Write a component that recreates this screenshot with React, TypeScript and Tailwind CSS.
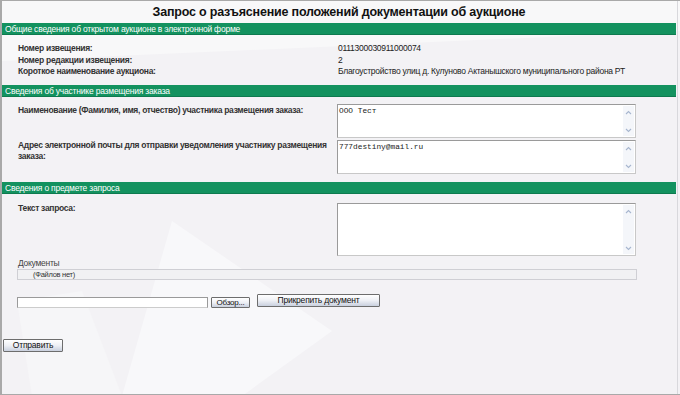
import React from "react";

const F = { fontFamily: '"Liberation Sans", Arial, sans-serif' };

function Scroll() {
  return (
    <div className="absolute right-[1px] top-[1px] bottom-[1px] w-[11px] bg-[#f4f6fa] flex flex-col justify-between items-center">
      <svg width="9" height="9" viewBox="0 0 9 9" className="mt-[2px]">
        <path d="M2 6 L4.5 3.5 L7 6" fill="none" stroke="#a7b6cf" strokeWidth="1.1" />
      </svg>
      <svg width="9" height="9" viewBox="0 0 9 9" className="mb-[1px]">
        <path d="M2 3 L4.5 5.5 L7 3" fill="none" stroke="#a7b6cf" strokeWidth="1.1" />
      </svg>
    </div>
  );
}

function Area({ h, text }: { h: number; text?: string }) {
  return (
    <div
      className="relative shrink-0 w-[299px] bg-white border border-[#9a9a9a] border-b-[#c8c8c8] border-r-[#c8c8c8]"
      style={{ height: h }}
    >
      <div
        className="px-[1px] pt-[1px] text-[7.8px] leading-[10px] text-[#222] font-normal tracking-normal"
        style={{ fontFamily: '"Liberation Mono", "Courier New", monospace' }}
      >
        {text}
      </div>
      <Scroll />
    </div>
  );
}

function Bar({ children }: { children: React.ReactNode }) {
  return (
    <div className="h-[12px] bg-[#13925f] text-white text-[8.5px] tracking-[-0.2px] leading-[12px] pl-[3px] border-b border-[#0e7a4f]">
      {children}
    </div>
  );
}

function Btn({ children, cls }: { children: React.ReactNode; cls: string }) {
  return (
    <div
      className={
        "flex items-center justify-center border border-[#6d6d6d] rounded-[1px] bg-gradient-to-b from-[#ffffff] via-[#eef0f5] to-[#c9d0de] text-[8.5px] tracking-[-0.2px] text-[#111] " +
        cls
      }
    >
      {children}
    </div>
  );
}

export default function App() {
  return (
    <div
      className="relative w-[680px] h-[395px] overflow-hidden border-l-2 border-t border-b border-[#a9a9a9] bg-[#f3f2f5]"
      style={F}
    >
      <svg className="absolute inset-0 pointer-events-none" width="680" height="395">
        <polygon points="0,0 680,0 680,30 0,60" fill="#f8f8f9" />
        <polygon points="170,220 330,330 240,395 120,395" fill="#f8f8fa" />
        <polygon points="15,300 80,290 120,395 30,395" fill="#f6f6f8" />
      </svg>
      <div className="relative mr-[2px] border-r border-[#d8d8dc] h-full pr-[1px]">
        <div className="h-[22px] flex items-center justify-center text-[12.5px] tracking-[-0.2px] font-bold text-[#111] pt-[1px]">
          Запрос о разъяснение положений документации об аукционе
        </div>
        <Bar>Общие сведения об открытом аукционе в электронной форме</Bar>
        <div className="pt-[8px] pb-[7px] text-[8.5px] tracking-[-0.27px] leading-[11.5px] text-[#222]">
          {[
            ["Номер извещения:", "0111300030911000074"],
            ["Номер редакции извещения:", "2"],
            ["Короткое наименование аукциона:", "Благоустройство улиц д. Кулуново Актанышского муниципального района РТ"],
          ].map(([a, b]) => (
            <div key={a} className="flex">
              <div className="pl-[16px] w-[336px] font-bold text-[#333] tracking-[-0.3px]">{a}</div>
              <div className="whitespace-nowrap">{b}</div>
            </div>
          ))}
        </div>
        <Bar>Сведения об участнике размещения заказа</Bar>
        <div className="pt-[7px] pb-[8px] text-[8.5px] tracking-[-0.3px] leading-[11px] text-[#333] font-bold flex flex-col gap-[2px]">
          <div className="flex">
            <div className="pl-[16px] w-[335px] pt-[1px] pr-[8px]">
              Наименование (Фамилия, имя, отчество) участника размещения заказа:
            </div>
            <Area h={34} text="ООО Тест" />
          </div>
          <div className="flex">
            <div className="pl-[16px] w-[335px] pt-[0px] whitespace-nowrap">
              Адрес электронной почты для отправки уведомления участнику размещения
              <br />
              заказа:
            </div>
            <Area h={34} text="777destiny@mail.ru" />
          </div>
        </div>
        <Bar>Сведения о предмете запроса</Bar>
        <div className="pt-[9px] text-[8.5px] tracking-[-0.27px] leading-[11px] text-[#333]">
          <div className="flex">
            <div className="pl-[16px] w-[335px] font-bold tracking-[-0.3px]">Текст запроса:</div>
            <Area h={53} />
          </div>
          <div className="pl-[16px] mt-[2px] text-[#444]">Документы</div>
          <div className="ml-[15px] w-[620px] h-[11px] border border-[#cfcfd4] bg-[#f1f1f3] text-[7.5px] leading-[9px] pl-[15px] text-[#333]">
            (Файлов нет)
          </div>
          <div className="flex items-center pl-[15px] mt-[14px]">
            <div className="w-[191px] h-[11px] border border-[#9a9a9a] border-b-[#cccccc] bg-white mt-[3px]" />
            <Btn cls="ml-[3px] w-[39px] h-[11px] mt-[3px] text-[8px]">Обзор...</Btn>
            <Btn cls="ml-[7px] w-[123px] h-[13px]">Прикрепить документ</Btn>
          </div>
          <div className="pl-[1px] mt-[31px]">
            <Btn cls="w-[60px] h-[13px]">Отправить</Btn>
          </div>
        </div>
      </div>
    </div>
  );
}
